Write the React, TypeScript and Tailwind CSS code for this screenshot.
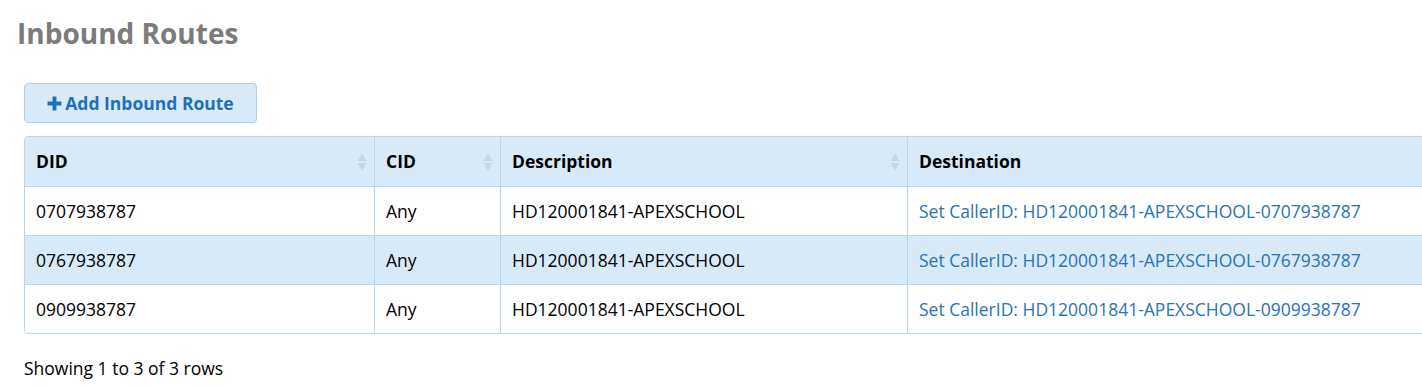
import React from "react";

const rows = [
  { did: "0707938787", cid: "Any", desc: "HD120001841-APEXSCHOOL", dest: "Set CallerID: HD120001841-APEXSCHOOL-0707938787" },
  { did: "0767938787", cid: "Any", desc: "HD120001841-APEXSCHOOL", dest: "Set CallerID: HD120001841-APEXSCHOOL-0767938787" },
  { did: "0909938787", cid: "Any", desc: "HD120001841-APEXSCHOOL", dest: "Set CallerID: HD120001841-APEXSCHOOL-0909938787" },
];

const SortIcon = () => (
  <svg width="10" height="20" viewBox="0 0 10 20" className="shrink-0">
    <path d="M5 1 L9.5 9 H0.5 Z" fill="#cdd5dc" />
    <path d="M5 19 L9.5 11 H0.5 Z" fill="#cdd5dc" />
  </svg>
);

const HeadCell = ({ label, sortable, className }: { label: string; sortable?: boolean; className: string }) => (
  <th className={`h-[49px] border-r border-[#b3d7ef] pl-[11px] pr-[7px] text-left font-bold ${className}`}>
    <div className="flex items-center justify-between">
      <span>{label}</span>
      {sortable && <SortIcon />}
    </div>
  </th>
);

export default function App() {
  return (
    <div
      className="min-h-screen w-full overflow-hidden bg-white text-[17.5px] text-black"
      style={{ fontFamily: '"Open Sans", "Liberation Sans", sans-serif' }}
    >
      <h1 className="pl-[17px] pt-[14px] text-[28px] font-bold leading-[38px] text-[#7b7b7b]">Inbound Routes</h1>

      <div className="pl-[24px] pt-[31px]">
        <button className="flex h-[40px] w-[233px] items-center justify-center gap-[3px] rounded-[4px] border border-[#a9d2ee] bg-[#d8eaf8] font-bold text-[#1f70b8]">
          <svg width="15" height="15" viewBox="0 0 14 14">
            <path d="M5.2 0.5 H8.8 V5.2 H13.5 V8.8 H8.8 V13.5 H5.2 V8.8 H0.5 V5.2 H5.2 Z" fill="#1f70b8" />
          </svg>
          <span>Add Inbound Route</span>
        </button>

        <table className="mt-[13px] w-[1500px] border-separate border-spacing-0 overflow-hidden rounded-[4px] border border-[#b3d7ef]">
          <thead>
            <tr className="bg-[#d8eaf8]">
              <HeadCell label="DID" sortable className="w-[350px]" />
              <HeadCell label="CID" sortable className="w-[126px]" />
              <HeadCell label="Description" sortable className="w-[407px]" />
              <HeadCell label="Destination" className="" />
            </tr>
          </thead>
          <tbody>
            {rows.map((r, i) => (
              <tr key={r.did} className={i % 2 === 1 ? "bg-[#d8eaf8]" : "bg-white"}>
                <td className="h-[49px] border-r border-t border-[#b3d7ef] px-[11px]">{r.did}</td>
                <td className="h-[49px] border-r border-t border-[#b3d7ef] px-[11px]">{r.cid}</td>
                <td className="h-[49px] border-r border-t border-[#b3d7ef] px-[11px]">{r.desc}</td>
                <td className="h-[49px] border-t border-[#b3d7ef] px-[11px] text-[#2a73b5]">{r.dest}</td>
              </tr>
            ))}
          </tbody>
        </table>

        <p className="mt-[22px] leading-[24px]">Showing 1 to 3 of 3 rows</p>
      </div>
    </div>
  );
}
